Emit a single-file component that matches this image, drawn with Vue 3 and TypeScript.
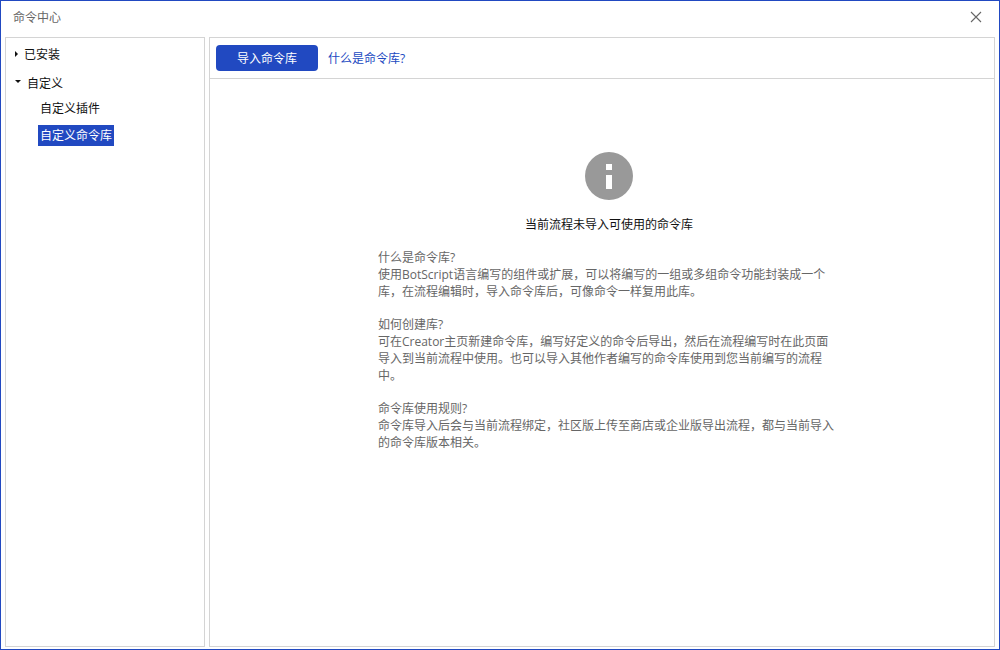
<script setup lang="ts">
import { ref } from 'vue'

interface TreeGroup {
  name: string
  open: boolean
  children: string[]
}

interface HelpSection {
  question: string
  answer: string
}

const groups = ref<TreeGroup[]>([
  { name: '已安装', open: false, children: [] },
  { name: '自定义', open: true, children: ['自定义插件', '自定义命令库'] },
])

const selected = ref('自定义命令库')

const sections: HelpSection[] = [
  {
    question: '什么是命令库?',
    answer:
      '使用BotScript语言编写的组件或扩展，可以将编写的一组或多组命令功能封装成一个库，在流程编辑时，导入命令库后，可像命令一样复用此库。',
  },
  {
    question: '如何创建库?',
    answer:
      '可在Creator主页新建命令库，编写好定义的命令后导出，然后在流程编写时在此页面导入到当前流程中使用。也可以导入其他作者编写的命令库使用到您当前编写的流程中。',
  },
  {
    question: '命令库使用规则?',
    answer:
      '命令库导入后会与当前流程绑定，社区版上传至商店或企业版导出流程，都与当前导入的命令库版本相关。',
  },
]
</script>

<template>
  <div class="window">
    <header class="titlebar">
      <h1 class="title">命令中心</h1>
      <button class="close" type="button" aria-label="关闭">
        <svg width="12" height="12" viewBox="0 0 12 12" aria-hidden="true">
          <path d="M1 1L11 11M11 1L1 11" fill="none" stroke="#666" stroke-width="1.1" />
        </svg>
      </button>
    </header>

    <div class="body">
      <nav class="sidebar">
        <ul class="tree">
          <li v-for="group in groups" :key="group.name">
            <button
              class="group"
              :class="{ open: group.open }"
              type="button"
              :aria-expanded="group.open"
              @click="group.open = !group.open"
            >
              <svg v-if="group.open" width="6" height="12" viewBox="0 0 6 12" aria-hidden="true">
                <path d="M0 2H6L3 5Z" fill="#111" />
              </svg>
              <svg v-else width="3" height="12" viewBox="0 0 3 12" aria-hidden="true">
                <path d="M0 2L3 5L0 8Z" fill="#111" />
              </svg>
              <span>{{ group.name }}</span>
            </button>
            <ul v-if="group.open" class="children">
              <li v-for="child in group.children" :key="child">
                <button
                  class="leaf"
                  :class="{ selected: child === selected }"
                  type="button"
                  @click="selected = child"
                >
                  {{ child }}
                </button>
              </li>
            </ul>
          </li>
        </ul>
      </nav>

      <main class="content">
        <div class="toolbar">
          <button class="import" type="button">导入命令库</button>
          <a class="help" href="#help">什么是命令库?</a>
        </div>
        <div class="empty">
          <svg width="48" height="48" viewBox="0 0 48 48" aria-hidden="true">
            <circle cx="24" cy="24" r="24" fill="#999" />
            <path d="M21 12H27V18H21ZM21 23H27V37H21Z" fill="#fff" />
          </svg>
          <p class="notice">当前流程未导入可使用的命令库</p>
          <div id="help" class="guide">
            <section v-for="section in sections" :key="section.question">
              <h2>{{ section.question }}</h2>
              <p>{{ section.answer }}</p>
            </section>
          </div>
        </div>
      </main>
    </div>
  </div>
</template>

<style>
body {
  margin: 0;
}
</style>

<style scoped>
.window {
  box-sizing: border-box;
  min-height: 100vh;
  display: flex;
  flex-direction: column;
  padding: 0 4px 2px;
  border: 1px solid #2149c1;
  background: #fff;
  color: #111;
  font-family: "Open Sans", "Noto Sans CJK SC", sans-serif;
  font-size: 12px;
  line-height: 17px;
}

button {
  padding: 0;
  border: 0;
  background: none;
  color: inherit;
  font: inherit;
  cursor: pointer;
}

h1,
h2,
p,
ul {
  margin: 0;
  padding: 0;
  font-size: inherit;
  font-weight: 400;
  list-style: none;
}

.titlebar {
  display: flex;
  align-items: center;
  justify-content: space-between;
  height: 36px;
  padding: 0 8px;
}

.title {
  padding-bottom: 4px;
  color: #666;
}

.close {
  display: flex;
  padding: 4px 5px 8px;
}

.body {
  flex: 1;
  display: flex;
  gap: 4px;
}

.sidebar,
.content {
  box-sizing: border-box;
  border: 1px solid #d4d4d4;
}

.sidebar {
  flex: 0 0 200px;
  padding: 8px 9px;
}

.tree {
  display: flex;
  flex-direction: column;
  gap: 12px;
}

.group {
  display: flex;
  align-items: center;
  gap: 6px;
}

.children {
  display: flex;
  flex-direction: column;
  gap: 6px;
  padding: 6px 0 0 23px;
}

.leaf {
  display: block;
  padding: 2px;
}

.leaf.selected {
  background: #2149c1;
  color: #fff;
}

.content {
  flex: 1;
  min-width: 0;
}

.toolbar {
  display: flex;
  align-items: center;
  gap: 10px;
  height: 40px;
  padding: 0 6px;
  border-bottom: 1px solid #d4d4d4;
}

.import {
  width: 102px;
  height: 26px;
  border-radius: 4px;
  background: #2149c1;
  color: #fff;
}

.help {
  color: #2149c1;
  text-decoration: none;
}

.empty {
  display: flex;
  flex-direction: column;
  align-items: center;
  padding: 73px 0 16px 14px;
}

.notice {
  margin-top: 16px;
}

.guide {
  display: flex;
  flex-direction: column;
  gap: 16px;
  box-sizing: border-box;
  width: 462px;
  max-width: 100%;
  margin-top: 16px;
  color: #666;
}
</style>
